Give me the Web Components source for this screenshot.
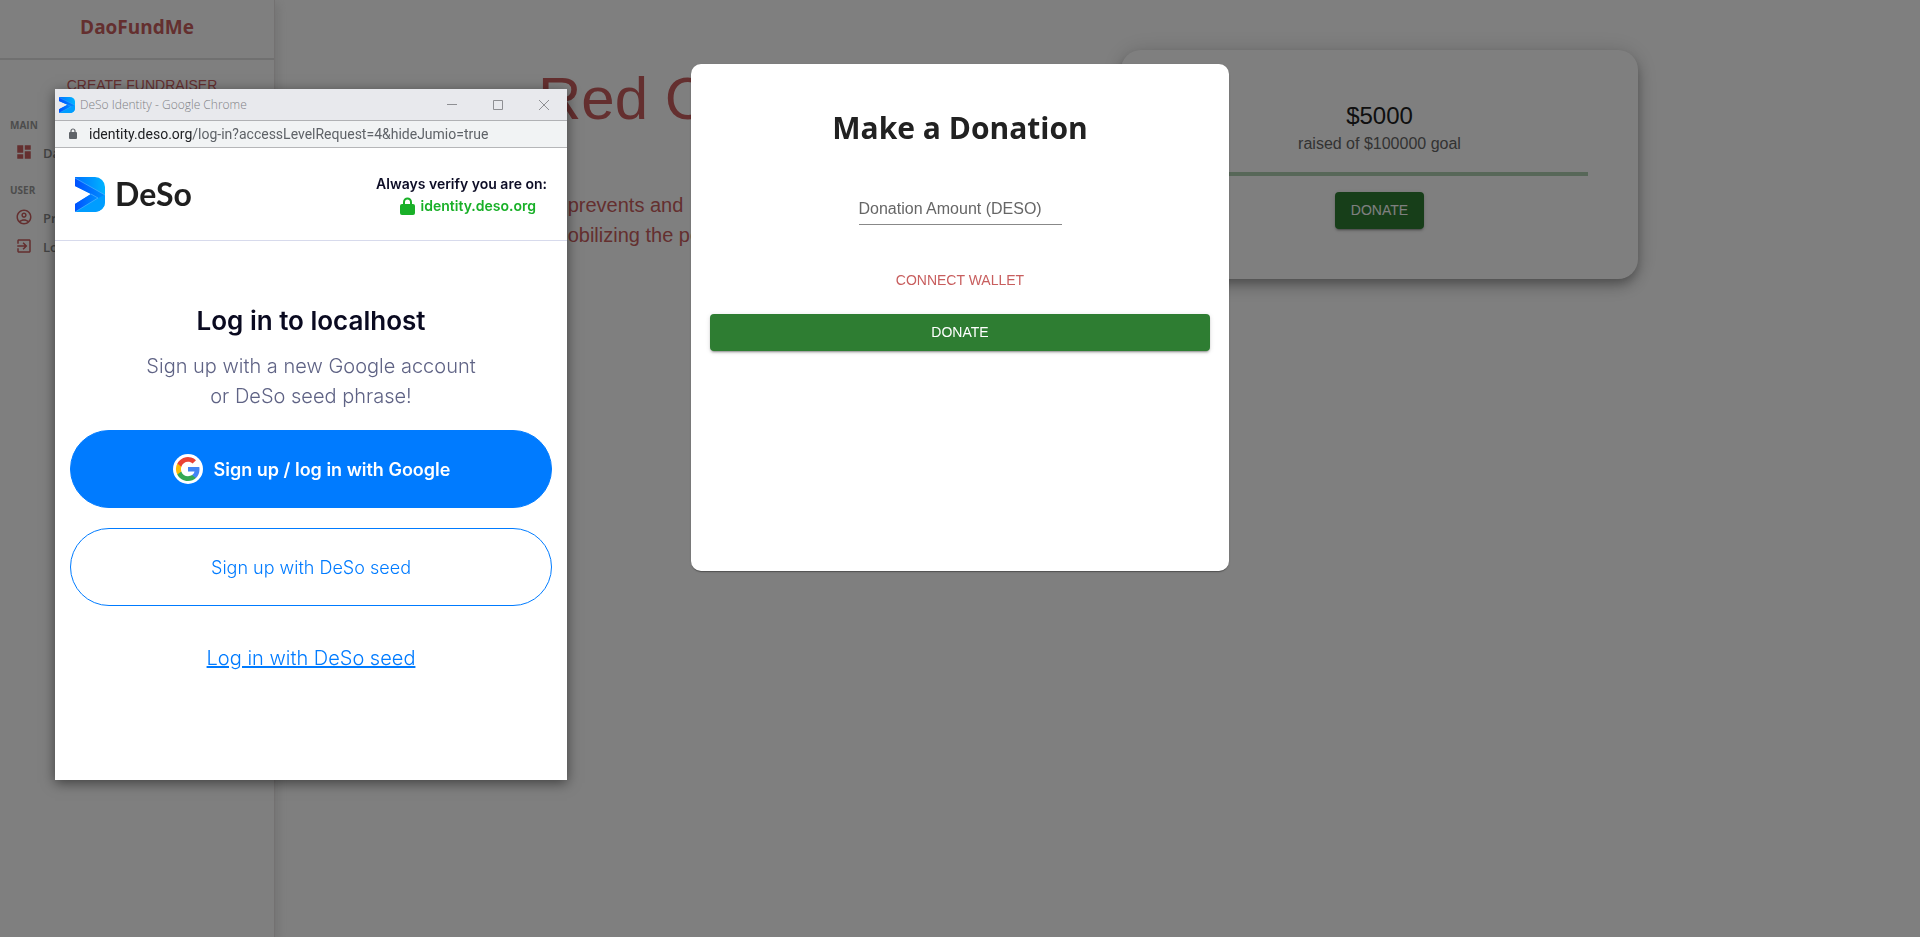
<!DOCTYPE html>
<html lang="en">
<head>
    <meta charset="UTF-8">
    <meta name="viewport" content="width=device-width, initial-scale=1.0">
    <title>DaoFundMe</title>
    <style>
        :root {
            --brand: #c85e5e;
            --success: #2e7d32;
            --success-light: #afceb1;
            --deso: #007bff;
            --ui: "Liberation Sans", Arial, sans-serif;
            --heading: "Open Sans", "Noto Sans", sans-serif;
            --wallet: Inter, "Liberation Sans", sans-serif;
        }

        body {
            margin: 0;
            background: #fff;
            font-family: var(--ui);
            color: #212121;
        }
    </style>
</head>
<body>
    <dao-app>
        <dao-sidebar></dao-sidebar>
        <fundraiser-page heading="Red Cross">
            It prevents and<br>
            mobilizing the power
        </fundraiser-page>
        <donation-modal slot="overlay"></donation-modal>
        <browser-popup slot="popup" heading="DeSo Identity - Google Chrome" host="identity.deso.org" path="/log-in?accessLevelRequest=4&amp;hideJumio=true">
            <deso-login></deso-login>
        </browser-popup>
    </dao-app>

    <script>
        class BaseElement extends HTMLElement {
            connectedCallback() {
                if (this.shadowRoot) return;
                this.attachShadow({ mode: 'open' });
                this.shadowRoot.innerHTML = this.render();
            }
        }

        // Page shell: content below, dimmed backdrop and popup window above
        class DaoApp extends BaseElement {
            render() {
                return `
                    <style>
                        :host {
                            display: block;
                        }
                        .home {
                            display: flex;
                            min-height: 100vh;
                        }
                        .backdrop {
                            position: fixed;
                            inset: 0;
                            display: flex;
                            justify-content: center;
                            align-items: flex-start;
                            padding-top: 64px;
                            background: rgba(0, 0, 0, 0.5);
                        }
                        .popup {
                            position: absolute;
                            left: 55px;
                            top: 89px;
                        }
                    </style>
                    <div class="home"><slot></slot></div>
                    <div class="backdrop"><slot name="overlay"></slot></div>
                    <div class="popup"><slot name="popup"></slot></div>
                `;
            }
        }

        class MuiButton extends BaseElement {
            render() {
                return `
                    <style>
                        :host {
                            display: inline-flex;
                        }
                        button {
                            flex: 1;
                            padding: 6px 16px;
                            border: 0;
                            border-radius: 4px;
                            background: transparent;
                            color: var(--brand);
                            font-family: var(--ui);
                            font-size: 14px;
                            line-height: 25px;
                            text-transform: uppercase;
                            cursor: pointer;
                        }
                        :host([contained]) button {
                            background: var(--success);
                            color: #fff;
                            box-shadow: 0 3px 1px -2px rgba(0, 0, 0, 0.2), 0 2px 2px rgba(0, 0, 0, 0.14), 0 1px 5px rgba(0, 0, 0, 0.12);
                        }
                    </style>
                    <button type="button"><slot></slot></button>
                `;
            }
        }

        class SideLink extends BaseElement {
            render() {
                const icons = {
                    dashboard: 'M3 13h8V3H3v10zm0 8h8v-6H3v6zm10 0h8V11h-8v10zm0-18v6h8V3h-8z',
                    profile: 'M12 2C6.48 2 2 6.48 2 12s4.48 10 10 10 10-4.48 10-10S17.52 2 12 2zM7.35 18.5C8.66 17.56 10.26 17 12 17s3.34.56 4.65 1.5c-1.31.94-2.91 1.5-4.65 1.5s-3.34-.56-4.65-1.5zm10.79-1.38C16.45 15.8 14.32 15 12 15s-4.45.8-6.14 2.12C4.7 15.73 4 13.95 4 12c0-4.42 3.58-8 8-8s8 3.58 8 8c0 1.95-.7 3.73-1.86 5.12zM12 6c-1.93 0-3.5 1.57-3.5 3.5S10.07 13 12 13s3.5-1.57 3.5-3.5S13.93 6 12 6zm0 5c-.83 0-1.5-.67-1.5-1.5S11.17 8 12 8s1.5.67 1.5 1.5S12.83 11 12 11z',
                    logout: 'M10.09 15.59 11.5 17l5-5-5-5-1.41 1.41L12.67 11H3v2h9.67l-2.58 2.59zM19 3H5c-1.11 0-2 .9-2 2v4h2V5h14v14H5v-4H3v4c0 1.1.89 2 2 2h14c1.1 0 2-.9 2-2V5c0-1.1-.9-2-2-2z'
                };
                return `
                    <style>
                        :host {
                            display: block;
                        }
                        a {
                            display: flex;
                            align-items: center;
                            gap: 10px;
                            height: 29px;
                            padding-left: 5px;
                            color: #888;
                            font: 600 13px var(--heading);
                            text-decoration: none;
                        }
                        svg {
                            width: 18px;
                            height: 18px;
                            fill: var(--brand);
                        }
                        span {
                            padding-top: 3px;
                        }
                    </style>
                    <a href="#${this.getAttribute('icon')}">
                        <svg viewBox="0 0 24 24" aria-hidden="true"><path d="${icons[this.getAttribute('icon')]}"/></svg>
                        <span><slot></slot></span>
                    </a>
                `;
            }
        }

        class DaoSidebar extends BaseElement {
            render() {
                return `
                    <style>
                        :host {
                            display: block;
                            flex: 0 0 274px;
                            border-right: 1px solid #e6e3e3;
                            box-shadow: 2px 4px 10px 1px rgba(201, 201, 201, 0.47);
                        }
                        .top {
                            display: flex;
                            align-items: center;
                            justify-content: center;
                            height: 58px;
                            border-bottom: 2px solid #e0e0e0;
                        }
                        .logo {
                            padding-bottom: 4px;
                            color: var(--brand);
                            font: 700 19px/26px var(--heading);
                        }
                        nav {
                            display: flex;
                            flex-direction: column;
                            padding: 7px 0 0 10px;
                        }
                        mui-button {
                            align-self: center;
                            margin-bottom: 14px;
                        }
                        h2 {
                            margin: 0 0 5px;
                            color: #999;
                            font: 700 10px/14px var(--heading);
                        }
                        section {
                            margin-bottom: 17px;
                        }
                    </style>
                    <div class="top"><span class="logo">DaoFundMe</span></div>
                    <nav>
                        <mui-button>Create Fundraiser</mui-button>
                        <section>
                            <h2>MAIN</h2>
                            <side-link icon="dashboard">Dashboard</side-link>
                        </section>
                        <section>
                            <h2>USER</h2>
                            <side-link icon="profile">Profile</side-link>
                            <side-link icon="logout">Logout</side-link>
                        </section>
                    </nav>
                `;
            }
        }

        class FundraiserPage extends BaseElement {
            render() {
                return `
                    <style>
                        :host {
                            display: flex;
                            flex: 1;
                            align-items: flex-start;
                            padding: 50px 282px 0 263px;
                        }
                        article {
                            flex: 1;
                            padding-top: 13px;
                            color: var(--brand);
                        }
                        h1 {
                            margin: 0 0 55px;
                            font-size: 60px;
                            font-weight: 400;
                            line-height: 72px;
                        }
                        p {
                            margin: 0;
                            padding-left: 13px;
                            font-size: 20px;
                            line-height: 30px;
                        }
                        goal-card {
                            flex: 0 0 47%;
                        }
                    </style>
                    <article>
                        <h1>${this.getAttribute('heading')}</h1>
                        <p><slot></slot></p>
                    </article>
                    <goal-card raised="5000" goal="100000"></goal-card>
                `;
            }
        }

        class GoalCard extends BaseElement {
            render() {
                const raised = Number(this.getAttribute('raised'));
                const goal = Number(this.getAttribute('goal'));
                return `
                    <style>
                        :host {
                            display: flex;
                            flex-direction: column;
                            align-items: center;
                            box-sizing: border-box;
                            padding: 50px;
                            border-radius: 20px;
                            background: #fff;
                            box-shadow: 0 5px 8px -1px rgba(0, 0, 0, 0.2), 0 8px 16px rgba(0, 0, 0, 0.16), 0 1px 24px rgba(0, 0, 0, 0.14);
                        }
                        .raised {
                            font-size: 24px;
                            line-height: 32px;
                        }
                        .goal {
                            color: #666;
                            font-size: 16px;
                            line-height: 24px;
                        }
                        .bar {
                            align-self: stretch;
                            height: 4px;
                            margin: 16px 0;
                            background: var(--success-light);
                        }
                        .fill {
                            height: 100%;
                            background: var(--success);
                        }
                    </style>
                    <div class="raised">$${raised}</div>
                    <div class="goal">raised of $${goal} goal</div>
                    <div class="bar" role="progressbar" aria-label="raised" aria-valuenow="${raised}" aria-valuemax="${goal}">
                        <div class="fill" style="width: ${raised / goal * 100}%"></div>
                    </div>
                    <mui-button contained>Donate</mui-button>
                `;
            }
        }

        class DonationModal extends BaseElement {
            render() {
                return `
                    <style>
                        :host {
                            display: flex;
                            flex-direction: column;
                            align-items: center;
                            box-sizing: border-box;
                            width: 538px;
                            max-width: 100%;
                            min-height: 507px;
                            padding: 40px 19px;
                            border-radius: 10px;
                            background: #fff;
                            box-shadow: 0 2px 1px -1px rgba(0, 0, 0, 0.2), 0 1px 1px rgba(0, 0, 0, 0.14), 0 1px 3px rgba(0, 0, 0, 0.12);
                        }
                        h2 {
                            margin: 0 0 41px;
                            font: 700 30px/48px var(--heading);
                        }
                        .field {
                            display: grid;
                            width: 203px;
                            margin-bottom: 37px;
                        }
                        label, input {
                            grid-area: 1 / 1;
                            font-family: var(--ui);
                            font-size: 16px;
                            line-height: 31px;
                        }
                        label {
                            color: #666;
                            pointer-events: none;
                        }
                        input {
                            box-sizing: border-box;
                            width: 100%;
                            height: 32px;
                            padding: 0;
                            border: 0;
                            border-bottom: 1px solid #888;
                            background: transparent;
                            outline: 0;
                        }
                        .donate {
                            align-self: stretch;
                            margin-top: 15px;
                        }
                    </style>
                    <h2>Make a Donation</h2>
                    <div class="field">
                        <label for="amount">Donation Amount (DESO)</label>
                        <input id="amount" type="text">
                    </div>
                    <mui-button>Connect Wallet</mui-button>
                    <mui-button class="donate" contained>Donate</mui-button>
                `;
            }
        }

        class DesoMark extends BaseElement {
            render() {
                return `
                    <style>
                        :host {
                            display: block;
                        }
                        svg {
                            display: block;
                            width: 100%;
                            height: 100%;
                        }
                    </style>
                    <svg viewBox="0 0 30 35" preserveAspectRatio="none" aria-hidden="true">
                        <defs>
                            <linearGradient id="top" x1="0" y1="0" x2="1" y2="0">
                                <stop offset="0" stop-color="#0072ff"/>
                                <stop offset="1" stop-color="#00b4ff"/>
                            </linearGradient>
                            <linearGradient id="arm" x1="0" y1="0" x2="1" y2="0">
                                <stop offset="0" stop-color="#0050ff"/>
                                <stop offset="1" stop-color="#0090ff"/>
                            </linearGradient>
                        </defs>
                        <path d="M0 0h20a10 10 0 0 1 10 10v15a10 10 0 0 1-10 10H0V27l16-10L0 9z" fill="url(#top)"/>
                        <path d="M0 1l30 17-7 4-7-5L0 9z" fill="url(#arm)"/>
                        <path d="M0 27l16-10 7 4L0 35z" fill="url(#arm)"/>
                        <path d="M0 35l23-14 7-3v7a10 10 0 0 1-10 10z" fill="#009dff"/>
                        <path d="M0 1l30 17M0 35l23-14-7-4" fill="none" stroke="#5cb8ff" stroke-width=".6"/>
                    </svg>
                `;
            }
        }

        class BrowserPopup extends BaseElement {
            render() {
                return `
                    <style>
                        :host {
                            display: flex;
                            flex-direction: column;
                            box-sizing: border-box;
                            width: 512px;
                            min-height: 691px;
                            background: #fff;
                            box-shadow: 0 3px 12px rgba(0, 0, 0, 0.5);
                        }
                        .titlebar {
                            display: flex;
                            align-items: center;
                            height: 31px;
                            padding-left: 4px;
                            border-bottom: 1px solid #b0b1b4;
                            background: #e8e9ed;
                            color: #808185;
                            font: 300 12px var(--heading);
                        }
                        deso-mark {
                            width: 16px;
                            height: 16px;
                            margin-right: 5px;
                        }
                        .heading {
                            flex: 1;
                        }
                        button {
                            display: grid;
                            place-items: center;
                            width: 46px;
                            height: 31px;
                            padding: 0;
                            border: 0;
                            background: transparent;
                        }
                        button svg {
                            width: 10px;
                            height: 10px;
                            fill: none;
                            stroke: #8e8f93;
                        }
                        .address {
                            display: flex;
                            align-items: center;
                            gap: 11px;
                            height: 26px;
                            padding-left: 13px;
                            border-bottom: 1px solid #b5b6b8;
                            background: #f1f3f4;
                            color: #5f6368;
                            font: 14px Roboto, sans-serif;
                        }
                        .address b {
                            color: #202124;
                            font-weight: 400;
                        }
                    </style>
                    <div class="titlebar">
                        <deso-mark></deso-mark>
                        <span class="heading">${this.getAttribute('heading')}</span>
                        <button type="button" aria-label="Minimize"><svg viewBox="0 0 10 10"><path d="M0 4.5h10"/></svg></button>
                        <button type="button" aria-label="Maximize"><svg viewBox="0 0 10 10"><path d="M.5.5h9v9h-9z"/></svg></button>
                        <button type="button" aria-label="Close"><svg viewBox="0 0 10 10"><path d="M0 0l10 10M10 0L0 10"/></svg></button>
                    </div>
                    <div class="address">
                        <svg width="10" height="12" viewBox="0 0 10 12" aria-hidden="true">
                            <rect x="1" y="4" width="8" height="7" rx="1" fill="#5f6368"/>
                            <path d="M3 5V3a2 2 0 0 1 4 0v2" fill="none" stroke="#5f6368" stroke-width="1.2"/>
                        </svg>
                        <span><b>${this.getAttribute('host')}</b>${this.getAttribute('path')}</span>
                    </div>
                    <slot></slot>
                `;
            }
        }

        class DesoLogin extends BaseElement {
            render() {
                return `
                    <style>
                        :host {
                            display: block;
                            font-family: var(--wallet);
                        }
                        header {
                            display: flex;
                            align-items: center;
                            height: 92px;
                            padding: 0 20px;
                            border-bottom: 1px solid #d7daec;
                        }
                        deso-mark {
                            width: 30px;
                            height: 35px;
                        }
                        .brand {
                            flex: 1;
                            margin-left: 10px;
                            color: #1f1f1f;
                            font: 700 32px/36px Lato, sans-serif;
                        }
                        .verify {
                            padding-top: 2px;
                            color: #0d0d26;
                            font-size: 14px;
                            font-weight: 600;
                            line-height: 22px;
                        }
                        .site {
                            display: flex;
                            align-items: center;
                            justify-content: flex-end;
                            gap: 6px;
                            padding-right: 11px;
                            color: #19b028;
                        }
                        main {
                            display: flex;
                            flex-direction: column;
                            padding: 64px 15px 0;
                            text-align: center;
                        }
                        h1 {
                            margin: 0 0 14px;
                            color: #0a0a20;
                            font-size: 26px;
                            font-weight: 600;
                            line-height: 32px;
                        }
                        p {
                            margin: 0 0 19px;
                            color: #5f6385;
                            font-size: 20px;
                            font-weight: 300;
                            line-height: 30px;
                        }
                        button {
                            display: flex;
                            align-items: center;
                            justify-content: center;
                            gap: 10px;
                            height: 78px;
                            margin-bottom: 20px;
                            padding-top: 2px;
                            border: 1px solid var(--deso);
                            border-radius: 39px;
                            background: #fff;
                            color: var(--deso);
                            font: 300 18px var(--wallet);
                        }
                        .google {
                            background: var(--deso);
                            color: #fff;
                            font-weight: 600;
                        }
                        a {
                            align-self: center;
                            margin-top: 17px;
                            color: var(--deso);
                            font-size: 20px;
                            font-weight: 300;
                            line-height: 30px;
                            text-decoration-thickness: 2px;
                        }
                    </style>
                    <header>
                        <deso-mark></deso-mark>
                        <span class="brand">DeSo</span>
                        <div class="verify">
                            <div>Always verify you are on:</div>
                            <div class="site">
                                <svg width="15" height="18" viewBox="0 0 15 18" aria-hidden="true">
                                    <rect y="7" width="15" height="11" rx="2" fill="#19b028"/>
                                    <path d="M4 8V5a3.5 3.5 0 0 1 7 0v3" fill="none" stroke="#19b028" stroke-width="2"/>
                                </svg>
                                <span>identity.deso.org</span>
                            </div>
                        </div>
                    </header>
                    <main>
                        <h1>Log in to localhost</h1>
                        <p>Sign up with a new Google account<br>or DeSo seed phrase!</p>
                        <button class="google" type="button">
                            <svg width="32" height="32" viewBox="0 0 32 32" aria-hidden="true">
                                <circle cx="16" cy="15" r="15" fill="#fff"/>
                                <g transform="translate(4 3)">
                                    <path fill="#4285f4" d="M23.5 12.3c0-.9-.1-1.5-.2-2.2H12v4.4h6.5c-.3 1.5-1.1 2.7-2.4 3.6v3h3.9c2.2-2.1 3.5-5.1 3.5-8.8z"/>
                                    <path fill="#34a853" d="M12 24c3.2 0 6-1.1 7.900-2.900l-3.900-3c-1.100.7-2.400 1.200-4 1.200-3.100 0-5.800-2.100-6.700-4.900h-4v3.100C3.300 21.400 7.300 24 12 24z"/>
                                    <path fill="#fbbc05" d="M5.300 14.400a7.200 7.200 0 0 1 0-4.700V6.600h-4a12 12 0 0 0 0 10.900z"/>
                                    <path fill="#ea4335" d="M12 4.800c1.800 0 3.400.6 4.600 1.800L20 3.200A12 12 0 0 0 1.300 6.600l4 3.100C6.200 6.900 8.900 4.800 12 4.800z"/>
                                </g>
                            </svg>
                            Sign up / log in with Google
                        </button>
                        <button type="button">Sign up with DeSo seed</button>
                        <a href="#seed">Log in with DeSo seed</a>
                    </main>
                `;
            }
        }

        customElements.define('dao-app', DaoApp);
        customElements.define('mui-button', MuiButton);
        customElements.define('side-link', SideLink);
        customElements.define('dao-sidebar', DaoSidebar);
        customElements.define('fundraiser-page', FundraiserPage);
        customElements.define('goal-card', GoalCard);
        customElements.define('donation-modal', DonationModal);
        customElements.define('deso-mark', DesoMark);
        customElements.define('browser-popup', BrowserPopup);
        customElements.define('deso-login', DesoLogin);
    </script>
</body>
</html>
